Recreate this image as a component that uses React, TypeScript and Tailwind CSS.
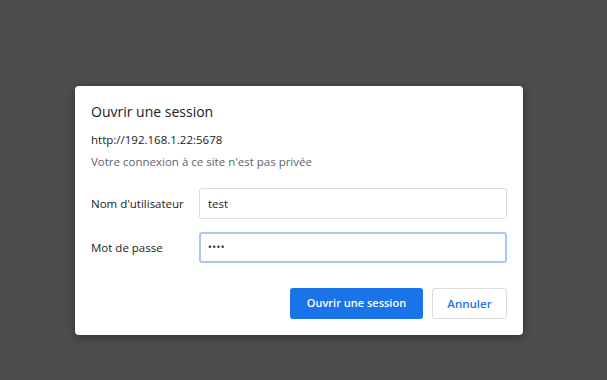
export default function App() {
  return (
    <div
      className="w-[607px] h-[380px] bg-[#4d4d4d] pl-[75px] pt-[86px]"
      style={{ fontFamily: '"Segoe UI", "Open Sans", "Noto Sans", sans-serif' }}
    >
      <div className="w-[448px] h-[249px] bg-white rounded-[4px] shadow-[0_2px_8px_rgba(0,0,0,0.4)] px-4 pt-[16px]">
        <h1 className="text-[14px] leading-5 text-[#202124]">Ouvrir une session</h1>
        <p className="mt-[10px] text-[11.5px] leading-4 text-[#202124]">http://192.168.1.22:5678</p>
        <p className="mt-[6px] text-[11.5px] leading-4 text-[#5f6368]">Votre connexion à ce site n'est pas privée</p>

        <div className="mt-[18px] flex flex-col gap-[13px]">
          <div className="flex items-center">
            <label className="w-[108px] text-[11.5px] text-[#202124]">Nom d'utilisateur</label>
            <div className="w-[308px] h-[31px] border border-[#dadce0] rounded-[3px] flex items-center px-[8px] text-[11.5px] text-[#202124]">
              test
            </div>
          </div>
          <div className="flex items-center">
            <label className="w-[108px] text-[11.5px] text-[#202124]">Mot de passe</label>
            <div className="w-[308px] h-[31px] border-2 border-[#a8c7fa] rounded-[3px] flex items-center px-[7px] text-[10px] tracking-[0.5px] text-[#202124]">
              ••••
            </div>
          </div>
        </div>

        <div className="mt-[25px] flex justify-end gap-[9px] w-[416px]">
          <button className="w-[133px] h-[31px] bg-[#1a73e8] rounded-[3px] text-white text-[11px] font-semibold">
            Ouvrir une session
          </button>
          <button className="w-[75px] h-[31px] border border-[#dadce0] rounded-[3px] text-[#1a73e8] text-[11.5px] font-semibold">
            Annuler
          </button>
        </div>
      </div>
    </div>
  );
}
